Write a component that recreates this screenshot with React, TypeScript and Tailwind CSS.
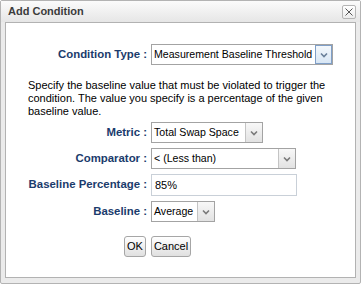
import React from "react";

const font = { fontFamily: '"Liberation Sans", Arial, sans-serif' };

function Chevron({ color = "#7a7a7a" }: { color?: string }) {
  return (
    <svg width="8" height="6" viewBox="0 0 8 6">
      <path d="M1 1.5 L4 4.5 L7 1.5" fill="none" stroke={color} strokeWidth="1.6" />
    </svg>
  );
}

function Select({ value, width, focused }: { value: string; width: string; focused?: boolean }) {
  return (
    <div className={`flex h-[21px] ${width} border border-[#a3a3a3] bg-white`}>
      <div className="flex flex-1 items-center overflow-hidden whitespace-nowrap pl-[2px] text-[10.6px] text-black">
        {value}
      </div>
      {focused ? (
        <div className="flex w-[17px] shrink-0 items-center justify-center border border-[#7f9fc8] bg-gradient-to-b from-[#f4f8fc] to-[#d8e6f4]">
          <Chevron color="#6a7f99" />
        </div>
      ) : (
        <div className="flex w-[17px] shrink-0 items-center justify-center border-l border-[#c4c4c4] bg-gradient-to-b from-[#f8f8f8] to-[#e2e2e2]">
          <Chevron />
        </div>
      )}
    </div>
  );
}

function Row({ label, children }: { label: string; children: React.ReactNode }) {
  return (
    <div className="flex items-center gap-[4px]">
      <div className="w-[141px] shrink-0 whitespace-nowrap text-right text-[11.4px] font-bold text-[#1b3b6c]">{label}</div>
      {children}
    </div>
  );
}

export default function App() {
  return (
    <div style={font} className="flex h-[284px] w-[361px] flex-col rounded-[2px] border border-[#b3b3b3] bg-[#ebebeb]">
      <div className="flex h-[21px] items-center justify-between bg-gradient-to-b from-[#fbfbfb] to-[#e6e6e6] pl-[7px] pr-[4px]">
        <span className="text-[11px] font-bold text-[#3c3c3c]">Add Condition</span>
        <div className="flex h-[14px] w-[14px] items-center justify-center rounded-[2px] border border-[#b5b5b5] bg-gradient-to-b from-white to-[#ececec]">
          <svg width="8" height="8" viewBox="0 0 8 8">
            <path d="M0.5 0.5 L7.5 7.5 M7.5 0.5 L0.5 7.5" stroke="#555" strokeWidth="1" />
          </svg>
        </div>
      </div>
      <div className="mx-[4px] mb-[5px] flex-1 border border-[#b2b2b2] bg-white pt-[21px]">
        <Row label="Condition Type :">
          <Select value="Measurement Baseline Threshold" width="w-[182px]" focused />
        </Row>
        <p className="mt-[14px] w-[320px] pl-[22px] text-[11px] leading-[13px] text-black">
          Specify the baseline value that must be violated to trigger the condition. The value you specify is a percentage of the given baseline value.
        </p>
        <div className="mt-[4px] flex flex-col gap-[5px]">
          <Row label="Metric :">
            <Select value="Total Swap Space" width="w-[112px]" />
          </Row>
          <Row label="Comparator :">
            <Select value="< (Less than)" width="w-[145px]" />
          </Row>
          <Row label="Baseline Percentage :">
            <div className="flex h-[22px] w-[146px] items-center border border-[#c9d0d8] bg-white pl-[3px] text-[11px] text-black">
              85%
            </div>
          </Row>
          <Row label="Baseline :">
            <Select value="Average" width="w-[64px]" />
          </Row>
        </div>
        <div className="ml-[118px] mt-[14px] flex gap-[5px]">
          <button className="h-[21px] w-[22px] rounded-[3px] border border-[#a6a6a6] bg-gradient-to-b from-white to-[#e0e0e0] text-[11px] text-black">
            OK
          </button>
          <button className="h-[21px] w-[40px] rounded-[3px] border border-[#a6a6a6] bg-gradient-to-b from-white to-[#e0e0e0] text-[11px] text-black">
            Cancel
          </button>
        </div>
      </div>
    </div>
  );
}
